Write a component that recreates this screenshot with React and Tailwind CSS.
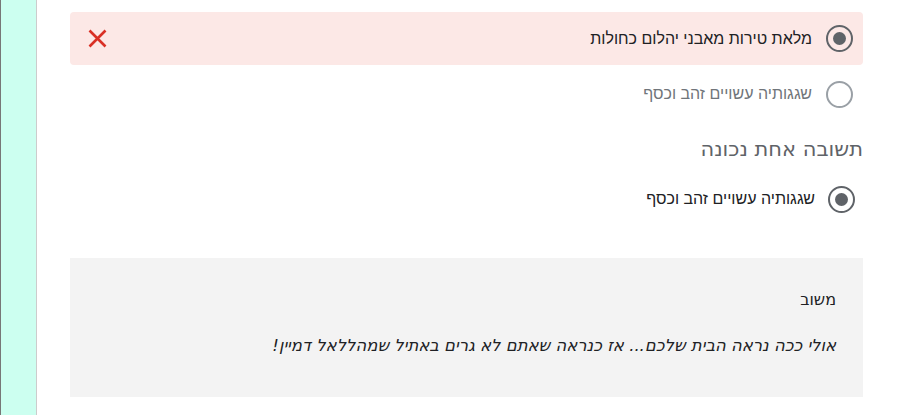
function Radio({ checked, muted }) {
  return (
    <span
      className={
        "flex h-[27px] w-[27px] shrink-0 items-center justify-center rounded-full border-2 " +
        (muted ? "border-[#9aa0a6]" : "border-[#5f6368]")
      }
    >
      {checked && <span className="h-[13px] w-[13px] rounded-full bg-[#5f6368]" />}
    </span>
  );
}

function WrongMark() {
  return (
    <svg className="mr-auto h-[19px] w-[19px]" viewBox="0 0 19 19" fill="none" stroke="#d93025" strokeWidth="2.6">
      <path d="M1.5 1.5 17.5 17.5M17.5 1.5 1.5 17.5" />
    </svg>
  );
}

export default function App() {
  return (
    <div className="flex min-h-[415px] bg-white text-[#202124]" style={{ fontFamily: '"Liberation Sans", Arial, sans-serif' }}>
      {/* Side strip */}
      <div className="w-[37px] shrink-0 border-l border-r border-l-[#777] border-r-[#ccc] bg-[#ccfff0]" />

      <div dir="rtl" className="flex-1 pl-[33px] pr-[34px] pt-3">
        {/* Wrong answer chosen */}
        <div className="flex h-[53px] items-center rounded bg-[#fce8e6] pr-[10px] pl-[18px]">
          <Radio checked />
          <span className="mr-[14px] text-[16px]">מלאת טירות מאבני יהלום כחולות</span>
          <WrongMark />
        </div>

        <div className="mt-1 flex h-[50px] items-center pr-[10px]">
          <Radio muted />
          <span className="mr-[14px] text-[16px] text-[#70757a]">שגגותיה עשויים זהב וכסף</span>
        </div>

        {/* Correct answer */}
        <div className="mt-[16px] text-[21px] leading-[28px] text-[#5f6368]" style={{ fontFamily: '"DejaVu Sans", sans-serif' }}>
          תשובה אחת נכונה
        </div>
        <div className="mt-[21px] flex h-[30px] items-center pr-[8px]">
          <Radio checked />
          <span className="mr-[13px] text-[16px]">שגגותיה עשויים זהב וכסף</span>
        </div>

        {/* Feedback */}
        <div className="mt-[44px] h-[139px] bg-[#f3f3f3] pr-[27px] pt-[30px]" style={{ fontFamily: '"DejaVu Sans", sans-serif' }}>
          <div className="text-[16px]">משוב</div>
          <div className="mt-[22px] text-[16.5px] italic">
            אולי ככה נראה הבית שלכם... אז כנראה שאתם לא גרים באתיל שמהללאל דמיין!
          </div>
        </div>
      </div>
    </div>
  );
}
